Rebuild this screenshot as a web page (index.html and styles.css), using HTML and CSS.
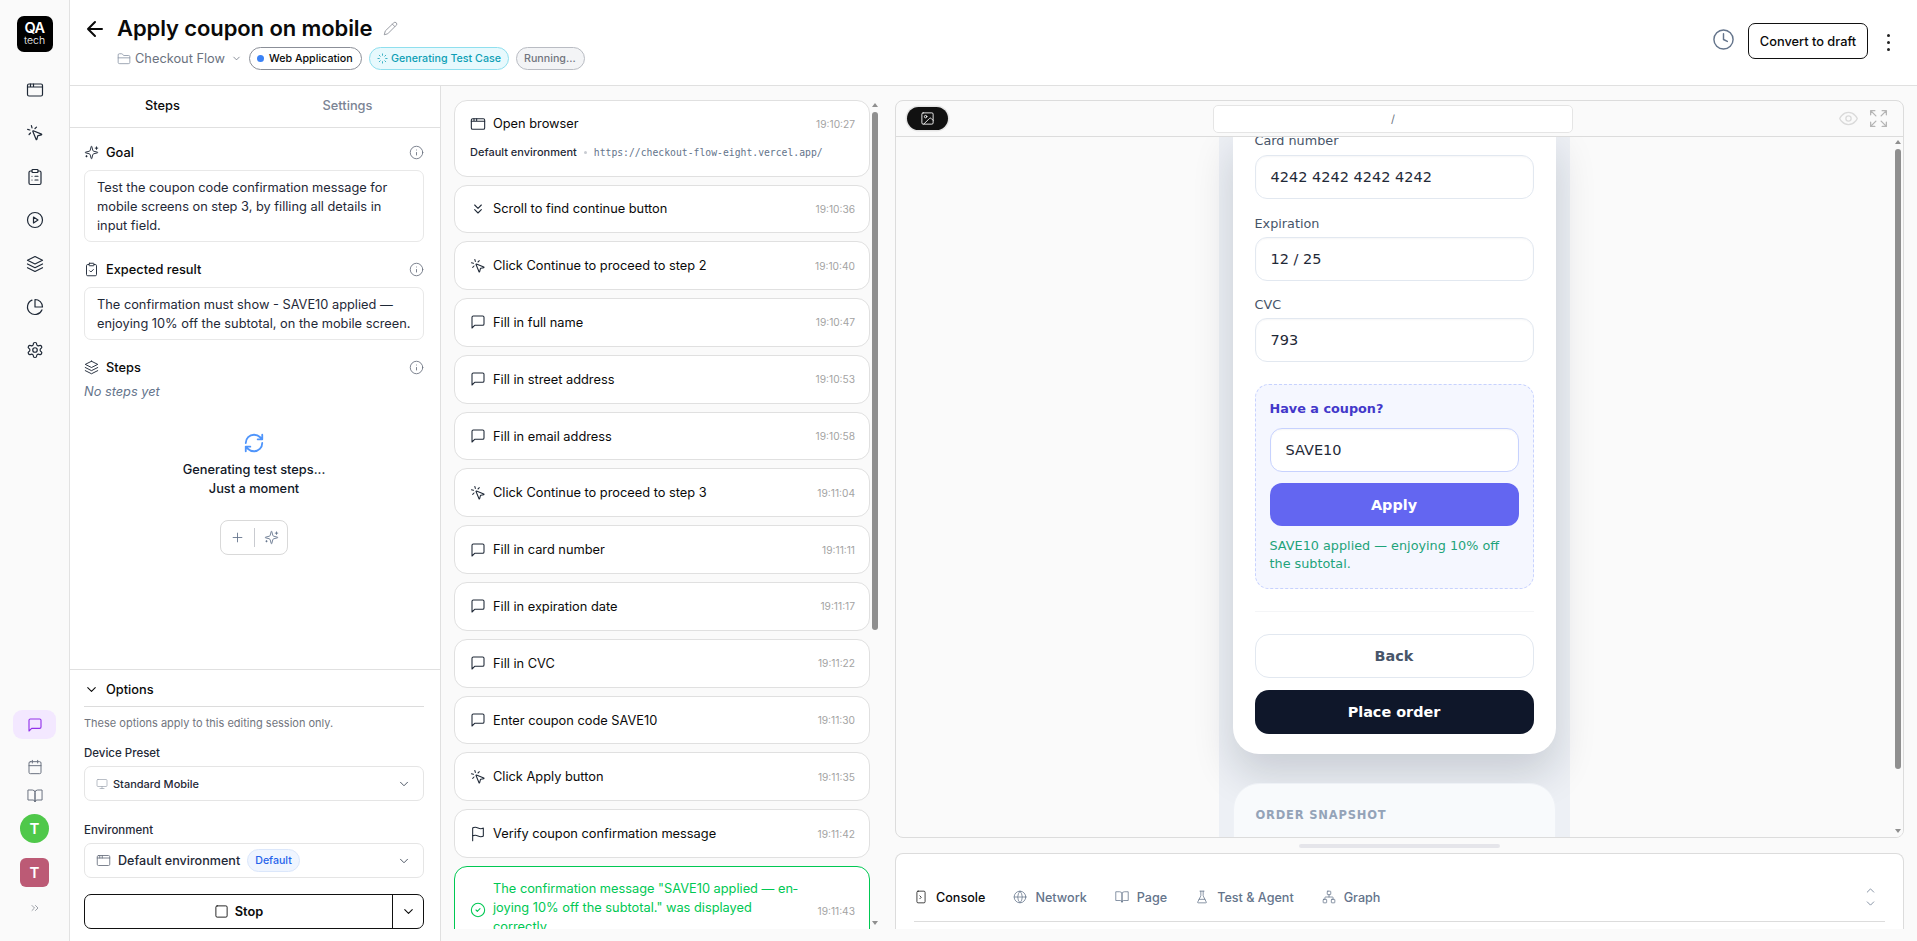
FILE: index.html
```html
<!DOCTYPE html>
<html>
<head>
    <title>Apply coupon on mobile</title>
    <link rel="stylesheet" href="styles.css">
</head>
<body>
    <svg class="sprite" xmlns="http://www.w3.org/2000/svg">
        <symbol id="i-window" viewBox="0 0 24 24"><rect x="2" y="4" width="20" height="16" rx="2"/><path d="M10 4v4M2 8h20M6 4v4"/></symbol>
        <symbol id="i-click" viewBox="0 0 24 24"><path d="M14 4.1 12 6M5.1 8l-2.9-.8M6 12l-1.9 2M7.2 2.2 8 5.1M9.037 9.69a.498.498 0 0 1 .653-.653l11 4.5a.5.5 0 0 1-.074.949l-4.349 1.041a1 1 0 0 0-.74.739l-1.04 4.35a.5.5 0 0 1-.95.074z"/></symbol>
        <symbol id="i-clipboard" viewBox="0 0 24 24"><rect x="8" y="2" width="8" height="4" rx="1"/><path d="M16 4h2a2 2 0 0 1 2 2v14a2 2 0 0 1-2 2H6a2 2 0 0 1-2-2V6a2 2 0 0 1 2-2h2M12 11h4M12 16h4M8 11h.01M8 16h.01"/></symbol>
        <symbol id="i-clipcheck" viewBox="0 0 24 24"><rect x="8" y="2" width="8" height="4" rx="1"/><path d="M16 4h2a2 2 0 0 1 2 2v14a2 2 0 0 1-2 2H6a2 2 0 0 1-2-2V6a2 2 0 0 1 2-2h2M9 14l2 2 4-4"/></symbol>
        <symbol id="i-play" viewBox="0 0 24 24"><circle cx="12" cy="12" r="10"/><path d="M10 8l6 4-6 4z"/></symbol>
        <symbol id="i-layers" viewBox="0 0 24 24"><path d="M12 2 2 7l10 5 10-5-10-5zM2 17l10 5 10-5M2 12l10 5 10-5"/></symbol>
        <symbol id="i-pie" viewBox="0 0 24 24"><path d="M21.21 15.89A10 10 0 1 1 8 2.83M22 12A10 10 0 0 0 12 2v10z"/></symbol>
        <symbol id="i-gear" viewBox="0 0 24 24"><path d="M12.22 2h-.44a2 2 0 0 0-2 2v.18a2 2 0 0 1-1 1.73l-.43.25a2 2 0 0 1-2 0l-.15-.08a2 2 0 0 0-2.73.73l-.22.38a2 2 0 0 0 .73 2.73l.15.1a2 2 0 0 1 1 1.72v.51a2 2 0 0 1-1 1.74l-.15.09a2 2 0 0 0-.73 2.73l.22.38a2 2 0 0 0 2.73.73l.15-.08a2 2 0 0 1 2 0l.43.25a2 2 0 0 1 1 1.73V20a2 2 0 0 0 2 2h.44a2 2 0 0 0 2-2v-.18a2 2 0 0 1 1-1.73l.43-.25a2 2 0 0 1 2 0l.15.08a2 2 0 0 0 2.73-.73l.22-.39a2 2 0 0 0-.73-2.73l-.15-.08a2 2 0 0 1-1-1.74v-.5a2 2 0 0 1 1-1.74l.15-.09a2 2 0 0 0 .73-2.73l-.22-.38a2 2 0 0 0-2.73-.73l-.15.08a2 2 0 0 1-2 0l-.43-.25a2 2 0 0 1-1-1.73V4a2 2 0 0 0-2-2z"/><circle cx="12" cy="12" r="3"/></symbol>
        <symbol id="i-msg" viewBox="0 0 24 24"><path d="M21 15a2 2 0 0 1-2 2H7l-4 4V5a2 2 0 0 1 2-2h14a2 2 0 0 1 2 2z"/></symbol>
        <symbol id="i-calendar" viewBox="0 0 24 24"><rect x="3" y="4" width="18" height="18" rx="2"/><path d="M16 2v4M8 2v4M3 10h18"/></symbol>
        <symbol id="i-book" viewBox="0 0 24 24"><path d="M2 3h6a4 4 0 0 1 4 4v14a3 3 0 0 0-3-3H2zM22 3h-6a4 4 0 0 0-4 4v14a3 3 0 0 1 3-3h7z"/></symbol>
        <symbol id="i-sparkles" viewBox="0 0 24 24"><path d="M9.937 15.5A2 2 0 0 0 8.5 14.063l-6.135-1.582a.5.5 0 0 1 0-.962L8.5 9.936A2 2 0 0 0 9.937 8.5l1.582-6.135a.5.5 0 0 1 .963 0L14.063 8.5A2 2 0 0 0 15.5 9.937l6.135 1.581a.5.5 0 0 1 0 .964L15.5 14.063a2 2 0 0 0-1.437 1.437l-1.582 6.135a.5.5 0 0 1-.963 0zM20 3v4M22 5h-4M4 17v2M5 18H3"/></symbol>
        <symbol id="i-info" viewBox="0 0 24 24"><circle cx="12" cy="12" r="10"/><path d="M12 16v-4M12 8h.01"/></symbol>
        <symbol id="i-refresh" viewBox="0 0 24 24"><path d="M3 12a9 9 0 0 1 9-9 9.75 9.75 0 0 1 6.74 2.74L21 8M21 3v5h-5M21 12a9 9 0 0 1-9 9 9.75 9.75 0 0 1-6.74-2.74L3 16M8 16H3v5"/></symbol>
        <symbol id="i-chevs" viewBox="0 0 24 24"><path d="M7 6l5 5 5-5M7 13l5 5 5-5"/></symbol>
        <symbol id="i-flag" viewBox="0 0 24 24"><path d="M4 15s1-1 4-1 5 2 8 2 4-1 4-1V3s-1 1-4 1-5-2-8-2-4 1-4 1zM4 22v-7"/></symbol>
        <symbol id="i-check" viewBox="0 0 24 24"><circle cx="12" cy="12" r="10"/><path d="M9 12l2 2 4-4"/></symbol>
        <symbol id="i-clock" viewBox="0 0 24 24"><circle cx="12" cy="12" r="10"/><path d="M12 6v6l4 2"/></symbol>
        <symbol id="i-folder" viewBox="0 0 24 24"><path d="M20 20a2 2 0 0 0 2-2V8a2 2 0 0 0-2-2h-7.9a2 2 0 0 1-1.69-.9L9.6 3.9A2 2 0 0 0 7.93 3H4a2 2 0 0 0-2 2v13a2 2 0 0 0 2 2ZM2 10h20"/></symbol>
        <symbol id="i-pencil" viewBox="0 0 24 24"><path d="M17 3a2.85 2.83 0 1 1 4 4L7.5 20.5 2 22l1.5-5.5ZM15 5l4 4"/></symbol>
        <symbol id="i-monitor" viewBox="0 0 24 24"><rect x="2" y="3" width="20" height="14" rx="2"/><path d="M8 21h8M12 17v4"/></symbol>
        <symbol id="i-square" viewBox="0 0 24 24"><rect x="3" y="3" width="18" height="18" rx="2"/></symbol>
        <symbol id="i-image" viewBox="0 0 24 24"><rect x="3" y="3" width="18" height="18" rx="2"/><circle cx="9" cy="9" r="2"/><path d="M21 15l-3.086-3.086a2 2 0 0 0-2.828 0L6 21"/></symbol>
        <symbol id="i-eye" viewBox="0 0 24 24"><path d="M2 12s3-7 10-7 10 7 10 7-3 7-10 7-10-7-10-7Z"/><circle cx="12" cy="12" r="3"/></symbol>
        <symbol id="i-expand" viewBox="0 0 24 24"><path d="M21 21l-6-6m6 6v-4.8m0 4.8h-4.8M3 16.2V21m0 0h4.8M3 21l6-6M21 7.8V3m0 0h-4.8M21 3l-6 6M3 7.8V3m0 0h4.8M3 3l6 6"/></symbol>
        <symbol id="i-term" viewBox="0 0 24 24"><rect x="5" y="2" width="14" height="20" rx="2"/><path d="M10 10l2.5 2.5L10 15"/></symbol>
        <symbol id="i-globe" viewBox="0 0 24 24"><circle cx="12" cy="12" r="10"/><path d="M12 2a14.5 14.5 0 0 0 0 20 14.5 14.5 0 0 0 0-20M2 12h20"/></symbol>
        <symbol id="i-flask" viewBox="0 0 24 24"><path d="M10 2v7.527a2 2 0 0 1-.211.896L4.72 20.55a1 1 0 0 0 .9 1.45h12.76a1 1 0 0 0 .9-1.45l-5.069-10.127A2 2 0 0 1 14 9.527V2M8.5 2h7M7 16h10"/></symbol>
        <symbol id="i-graph" viewBox="0 0 24 24"><rect x="16" y="16" width="6" height="6" rx="1"/><rect x="2" y="16" width="6" height="6" rx="1"/><rect x="9" y="2" width="6" height="6" rx="1"/><path d="M5 16v-3a1 1 0 0 1 1-1h12a1 1 0 0 1 1 1v3M12 12V8"/></symbol>
        <symbol id="i-down" viewBox="0 0 24 24"><path d="M6 9l6 6 6-6"/></symbol>
        <symbol id="i-up" viewBox="0 0 24 24"><path d="M18 15l-6-6-6 6"/></symbol>
        <symbol id="i-right2" viewBox="0 0 24 24"><path d="M6 17l5-5-5-5M13 17l5-5-5-5"/></symbol>
        <symbol id="i-back" viewBox="0 0 24 24"><path d="M12 19l-7-7 7-7M19 12H5"/></symbol>
        <symbol id="i-plus" viewBox="0 0 24 24"><path d="M5 12h14M12 5v14"/></symbol>
        <symbol id="i-loader" viewBox="0 0 24 24"><path d="M12 2v3M12 19v3M4.9 4.9 7 7M17 17l2.1 2.1M2 12h3M19 12h3M4.9 19.1 7 17M17 7l2.1-2.1"/></symbol>
    </svg>

    <div class="app">
        <aside class="sidebar">
            <div class="logo"><span class="logo-qa">QA</span><span class="logo-tech">tech</span></div>
            <nav class="side-nav">
                <svg class="ic side-ic"><use href="#i-window"/></svg>
                <svg class="ic side-ic"><use href="#i-click"/></svg>
                <svg class="ic side-ic"><use href="#i-clipboard"/></svg>
                <svg class="ic side-ic"><use href="#i-play"/></svg>
                <svg class="ic side-ic"><use href="#i-layers"/></svg>
                <svg class="ic side-ic"><use href="#i-pie"/></svg>
                <svg class="ic side-ic"><use href="#i-gear"/></svg>
            </nav>
            <div class="side-bottom">
                <div class="chat-btn"><svg class="ic chat-ic"><use href="#i-msg"/></svg></div>
                <svg class="ic side-small cal"><use href="#i-calendar"/></svg>
                <svg class="ic side-small book"><use href="#i-book"/></svg>
                <div class="avatar round">T</div>
                <div class="avatar squared">T</div>
                <svg class="ic side-more"><use href="#i-right2"/></svg>
            </div>
        </aside>

        <div class="main">
            <header class="topbar">
                <svg class="ic back-ic"><use href="#i-back"/></svg>
                <div class="title-block">
                    <div class="title-row">
                        <h1>Apply coupon on mobile</h1>
                        <svg class="ic pencil"><use href="#i-pencil"/></svg>
                    </div>
                    <div class="meta-row">
                        <svg class="ic folder"><use href="#i-folder"/></svg>
                        <span class="crumb">Checkout Flow</span>
                        <svg class="ic crumb-chev"><use href="#i-down"/></svg>
                        <span class="pill pill-app"><i class="dot"></i>Web Application</span>
                        <span class="pill pill-gen"><svg class="ic gen-ic"><use href="#i-loader"/></svg>Generating Test Case</span>
                        <span class="pill pill-run">Running...</span>
                    </div>
                </div>
                <div class="top-actions">
                    <svg class="ic clock"><use href="#i-clock"/></svg>
                    <button class="btn-outline">Convert to draft</button>
                    <div class="kebab"><i></i><i></i><i></i></div>
                </div>
            </header>

            <div class="workspace">
                <section class="left-panel">
                    <div class="tabs">
                        <div class="tab active">Steps</div>
                        <div class="tab">Settings</div>
                    </div>
                    <div class="left-body">
                        <div class="field-head first">
                            <svg class="ic head-ic"><use href="#i-sparkles"/></svg>
                            <span>Goal</span>
                            <svg class="ic info"><use href="#i-info"/></svg>
                        </div>
                        <div class="text-box">Test the coupon code confirmation message for mobile screens on step 3, by filling all details in input field.</div>
                        <div class="field-head">
                            <svg class="ic head-ic"><use href="#i-clipcheck"/></svg>
                            <span>Expected result</span>
                            <svg class="ic info"><use href="#i-info"/></svg>
                        </div>
                        <div class="text-box">The confirmation must show - SAVE10 applied — enjoying 10% off the subtotal, on the mobile screen.</div>
                        <div class="field-head">
                            <svg class="ic head-ic"><use href="#i-layers"/></svg>
                            <span>Steps</span>
                            <svg class="ic info"><use href="#i-info"/></svg>
                        </div>
                        <div class="no-steps">No steps yet</div>
                        <div class="generating">
                            <svg class="ic spin"><use href="#i-refresh"/></svg>
                            <p>Generating test steps...<br>Just a moment</p>
                            <div class="add-group">
                                <svg class="ic add-ic"><use href="#i-plus"/></svg>
                                <i class="add-sep"></i>
                                <svg class="ic add-ic"><use href="#i-sparkles"/></svg>
                            </div>
                        </div>
                    </div>
                    <div class="options">
                        <div class="options-head">
                            <svg class="ic opt-chev"><use href="#i-down"/></svg>
                            <span>Options</span>
                        </div>
                        <p class="hint">These options apply to this editing session only.</p>
                        <label class="opt-label">Device Preset</label>
                        <div class="select">
                            <svg class="ic sel-ic small"><use href="#i-monitor"/></svg>
                            <span class="sel-small">Standard Mobile</span>
                            <svg class="ic sel-chev"><use href="#i-down"/></svg>
                        </div>
                        <label class="opt-label env">Environment</label>
                        <div class="select">
                            <svg class="ic sel-ic"><use href="#i-window"/></svg>
                            <span class="sel-text">Default environment</span>
                            <span class="badge">Default</span>
                            <svg class="ic sel-chev"><use href="#i-down"/></svg>
                        </div>
                        <div class="stop-btn">
                            <div class="stop-main"><svg class="ic stop-ic"><use href="#i-square"/></svg>Stop</div>
                            <div class="stop-more"><svg class="ic stop-chev"><use href="#i-down"/></svg></div>
                        </div>
                    </div>
                </section>

                <section class="steps-col">
                    <div class="step-list">
                        <div class="step step-first">
                            <div class="step-row">
                                <svg class="ic step-ic"><use href="#i-window"/></svg>
                                <span class="step-name">Open browser</span>
                                <span class="step-time">19:10:27</span>
                            </div>
                            <div class="step-env">
                                <span>Default environment</span><i class="env-dot"></i><code>https://checkout-flow-eight.vercel.app/</code>
                            </div>
                        </div>
                        <div class="step"><svg class="ic step-ic"><use href="#i-chevs"/></svg><span class="step-name">Scroll to find continue button</span><span class="step-time">19:10:36</span></div>
                        <div class="step"><svg class="ic step-ic"><use href="#i-click"/></svg><span class="step-name">Click Continue to proceed to step 2</span><span class="step-time">19:10:40</span></div>
                        <div class="step"><svg class="ic step-ic"><use href="#i-msg"/></svg><span class="step-name">Fill in full name</span><span class="step-time">19:10:47</span></div>
                        <div class="step"><svg class="ic step-ic"><use href="#i-msg"/></svg><span class="step-name">Fill in street address</span><span class="step-time">19:10:53</span></div>
                        <div class="step"><svg class="ic step-ic"><use href="#i-msg"/></svg><span class="step-name">Fill in email address</span><span class="step-time">19:10:58</span></div>
                        <div class="step"><svg class="ic step-ic"><use href="#i-click"/></svg><span class="step-name">Click Continue to proceed to step 3</span><span class="step-time">19:11:04</span></div>
                        <div class="step"><svg class="ic step-ic"><use href="#i-msg"/></svg><span class="step-name">Fill in card number</span><span class="step-time">19:11:11</span></div>
                        <div class="step"><svg class="ic step-ic"><use href="#i-msg"/></svg><span class="step-name">Fill in expiration date</span><span class="step-time">19:11:17</span></div>
                        <div class="step"><svg class="ic step-ic"><use href="#i-msg"/></svg><span class="step-name">Fill in CVC</span><span class="step-time">19:11:22</span></div>
                        <div class="step"><svg class="ic step-ic"><use href="#i-msg"/></svg><span class="step-name">Enter coupon code SAVE10</span><span class="step-time">19:11:30</span></div>
                        <div class="step"><svg class="ic step-ic"><use href="#i-click"/></svg><span class="step-name">Click Apply button</span><span class="step-time">19:11:35</span></div>
                        <div class="step"><svg class="ic step-ic"><use href="#i-flag"/></svg><span class="step-name">Verify coupon confirmation message</span><span class="step-time">19:11:42</span></div>
                        <div class="step step-ok">
                            <svg class="ic step-ic"><use href="#i-check"/></svg>
                            <span class="step-name">The confirmation message "SAVE10 applied — en&shy;joying 10% off the subtotal." was displayed correctly</span>
                            <span class="step-time">19:11:43</span>
                        </div>
                    </div>
                    <div class="scrollbar">
                        <i class="arrow-up"></i>
                        <div class="track"><div class="thumb steps-thumb"></div></div>
                        <i class="arrow-down"></i>
                    </div>
                </section>

                <section class="right-col">
                    <div class="preview">
                        <div class="preview-bar">
                            <div class="shot-btn"><svg class="ic shot-ic"><use href="#i-image"/></svg></div>
                            <div class="url-box">/</div>
                            <div class="preview-tools">
                                <svg class="ic eye"><use href="#i-eye"/></svg>
                                <svg class="ic expand"><use href="#i-expand"/></svg>
                            </div>
                        </div>
                        <div class="preview-body">
                            <div class="viewport">
                                <div class="device">
                                    <div class="phone">
                                        <label class="f-label">Card number</label>
                                        <div class="f-input">4242 4242 4242 4242</div>
                                        <label class="f-label">Expiration</label>
                                        <div class="f-input">12 / 25</div>
                                        <label class="f-label">CVC</label>
                                        <div class="f-input">793</div>
                                        <div class="coupon">
                                            <div class="coupon-title">Have a coupon?</div>
                                            <div class="f-input coupon-input">SAVE10</div>
                                            <button class="apply">Apply</button>
                                            <p class="coupon-msg">SAVE10 applied — enjoying 10% off the subtotal.</p>
                                        </div>
                                        <div class="phone-line"></div>
                                        <button class="p-back">Back</button>
                                        <button class="p-place">Place order</button>
                                    </div>
                                    <div class="snapshot">ORDER SNAPSHOT</div>
                                </div>
                            </div>
                            <div class="scrollbar pv-scroll">
                                <i class="arrow-up"></i>
                                <div class="track"><div class="thumb pv-thumb"></div></div>
                                <i class="arrow-down"></i>
                            </div>
                        </div>
                    </div>
                    <div class="resizer"><i></i></div>
                    <div class="console">
                        <div class="console-tabs">
                            <div class="c-tab active"><svg class="ic c-ic"><use href="#i-term"/></svg>Console</div>
                            <div class="c-tab"><svg class="ic c-ic"><use href="#i-globe"/></svg>Network</div>
                            <div class="c-tab"><svg class="ic c-ic"><use href="#i-book"/></svg>Page</div>
                            <div class="c-tab"><svg class="ic c-ic"><use href="#i-flask"/></svg>Test &amp; Agent</div>
                            <div class="c-tab"><svg class="ic c-ic"><use href="#i-graph"/></svg>Graph</div>
                            <div class="c-toggle">
                                <svg class="ic"><use href="#i-up"/></svg>
                                <svg class="ic"><use href="#i-down"/></svg>
                            </div>
                        </div>
                    </div>
                </section>
            </div>
        </div>
    </div>
</body>
</html>
```

FILE: styles.css
```css
* {
    box-sizing: border-box;
}
html, body {
    margin: 0;
    height: 100%;
    overflow: hidden;
}
body {
    font-family: 'Inter', 'Liberation Sans', sans-serif;
    color: #0a0a0a;
    background-color: #fafafa;
    font-size: 12.8px;
}
.sprite {
    display: none;
}
.ic {
    display: block;
    width: 16px;
    height: 16px;
    fill: none;
    stroke: currentColor;
    stroke-width: 1.7;
    stroke-linecap: round;
    stroke-linejoin: round;
    flex: none;
}
.app {
    display: flex;
    height: 941px;
}

/* sidebar */
.sidebar {
    width: 70px;
    flex: none;
    display: flex;
    flex-direction: column;
    align-items: center;
    background-color: #fafafa;
    border-right: 1px solid #e2e2e2;
    padding-top: 16px;
}
.logo {
    width: 36px;
    height: 36px;
    background-color: #000;
    color: #fff;
    border-radius: 7px;
    display: flex;
    flex-direction: column;
    align-items: center;
    justify-content: center;
}
.logo-qa {
    font-size: 14.5px;
    font-weight: 600;
    letter-spacing: -0.6px;
    line-height: 14px;
}
.logo-tech {
    font-size: 10.5px;
    font-weight: 300;
    line-height: 12px;
}
.side-nav {
    display: flex;
    flex-direction: column;
    align-items: center;
    gap: 25.4px;
    margin-top: 29px;
}
.side-ic {
    width: 18px;
    height: 18px;
    color: #1f2937;
    stroke-width: 1.6;
}
.side-bottom {
    margin-top: auto;
    display: flex;
    flex-direction: column;
    align-items: center;
    padding-bottom: 27px;
}
.chat-btn {
    width: 43px;
    height: 29px;
    border-radius: 9px;
    background-color: #f3e8ff;
    color: #9333ea;
    display: flex;
    align-items: center;
    justify-content: center;
}
.side-small {
    color: #6b7280;
    width: 16px;
    height: 16px;
    stroke-width: 1.5;
}
.cal {
    margin-top: 20px;
}
.book {
    margin-top: 13px;
}
.avatar {
    width: 29px;
    height: 29px;
    color: #fff;
    font-weight: 600;
    font-size: 15px;
    display: flex;
    align-items: center;
    justify-content: center;
}
.avatar.round {
    margin-top: 10px;
    border-radius: 50%;
    background-color: #4fc84a;
}
.avatar.squared {
    margin-top: 15px;
    border-radius: 6px;
    background-color: #bc5a75;
}
.side-more {
    margin-top: 15px;
    width: 12px;
    height: 12px;
    color: #8a8f98;
}

/* top bar */
.main {
    flex: 1;
    min-width: 0;
    display: flex;
    flex-direction: column;
}
.topbar {
    height: 86px;
    flex: none;
    background-color: #fff;
    border-bottom: 1px solid #e0e0e0;
    display: flex;
    padding: 13px 0 0 13px;
}
.back-ic {
    width: 24px;
    height: 24px;
    stroke-width: 2;
    margin-top: 4px;
}
.title-block {
    margin-left: 10px;
}
.title-row {
    display: flex;
    align-items: center;
    height: 30px;
}
h1 {
    margin: 0;
    font-size: 22px;
    font-weight: 600;
    letter-spacing: -0.1px;
}
.pencil {
    width: 15px;
    height: 15px;
    color: #8b8f98;
    margin-left: 11px;
    stroke-width: 1.4;
}
.meta-row {
    display: flex;
    align-items: center;
    margin-top: 4px;
    height: 23px;
}
.folder {
    width: 14px;
    height: 14px;
    color: #8b95a5;
    stroke-width: 1.4;
}
.crumb {
    margin-left: 4px;
    color: #6b7280;
    font-size: 12.8px;
}
.crumb-chev {
    width: 11px;
    height: 11px;
    color: #6b7280;
    margin: 0 7px 0 6px;
}
.pill {
    height: 23px;
    border-radius: 12px;
    font-size: 10.7px;
    font-weight: 500;
    white-space: nowrap;
    display: flex;
    align-items: center;
    padding: 0 7px;
    margin-right: 7px;
    border: 1px solid #9ca3af;
}
.pill-app {
    width: 113px;
    border-color: #8b8f98;
}
.dot {
    width: 7px;
    height: 7px;
    border-radius: 50%;
    background-color: #3b82f6;
    margin-right: 5px;
    margin-left: 0;
}
.pill-gen {
    width: 140px;
    color: #0e9fb5;
    background-color: #e7f9fd;
    border-color: #8fdfee;
}
.gen-ic {
    width: 11px;
    height: 11px;
    margin-right: 3px;
}
.pill-run {
    width: 69px;
    color: #71757e;
    background-color: #f3f4f6;
    border-color: #b9bcc3;
}
.top-actions {
    margin-left: auto;
    display: flex;
    align-items: flex-start;
    padding: 10px 27px 0 0;
}
.clock {
    width: 23px;
    height: 23px;
    color: #64748b;
    margin: 5px 13px 0 0;
    stroke-width: 1.5;
}
.btn-outline {
    width: 120px;
    height: 36px;
    background-color: #fff;
    border: 1px solid #111;
    border-radius: 7px;
    font-family: inherit;
    font-size: 12.8px;
    font-weight: 500;
    color: #0a0a0a;
}
.kebab {
    display: flex;
    flex-direction: column;
    gap: 4px;
    margin: 11px 0 0 19px;
}
.kebab i {
    width: 3px;
    height: 3px;
    border-radius: 50%;
    background-color: #222;
}

/* left panel */
.workspace {
    flex: 1;
    min-height: 0;
    display: flex;
}
.left-panel {
    width: 371px;
    flex: none;
    background-color: #fff;
    border-right: 1px solid #e0e0e0;
    display: flex;
    flex-direction: column;
}
.tabs {
    display: flex;
    height: 42px;
    flex: none;
    padding-bottom: 2px;
    border-bottom: 1px solid #e0e0e0;
}
.tab {
    flex: 1;
    display: flex;
    align-items: center;
    justify-content: center;
    font-weight: 500;
    color: #7b8494;
}
.tab.active {
    color: #0a0a0a;
}
.left-body {
    flex: 1;
    min-height: 0;
    padding: 0 16px 0 14px;
}
.field-head {
    display: flex;
    align-items: center;
    height: 20px;
    margin: 17px 0 8px;
    font-weight: 500;
}
.field-head.first {
    margin: 14px 0 8px;
}
.head-ic {
    width: 15px;
    height: 15px;
    margin-right: 7px;
    color: #1f2937;
    stroke-width: 1.5;
}
.info {
    margin-left: auto;
    width: 15px;
    height: 15px;
    color: #6b7280;
    stroke-width: 1.4;
}
.text-box {
    border: 1px solid #e8e8e8;
    border-radius: 7px;
    padding: 6.5px 12px;
    line-height: 19px;
    color: #1f2937;
}
.no-steps {
    margin-top: -2px;
    font-size: 12.8px;
    line-height: 18px;
    font-style: italic;
    color: #64748b;
}
.generating {
    display: flex;
    flex-direction: column;
    align-items: center;
    margin-top: 31px;
}
.spin {
    width: 22px;
    height: 22px;
    color: #4f95fb;
    stroke-width: 2;
}
.generating p {
    margin: 7px 0 0;
    text-align: center;
    line-height: 18.5px;
    font-weight: 500;
    color: #111827;
}
.add-group {
    margin-top: 22px;
    width: 68px;
    height: 35px;
    border: 1px solid #d9d9d9;
    border-radius: 8px;
    display: flex;
    align-items: center;
    justify-content: center;
    color: #64748b;
}
.add-ic {
    width: 15px;
    height: 15px;
    stroke-width: 1.4;
}
.add-sep {
    width: 1px;
    height: 19px;
    background-color: #c9cbd0;
    margin: 0 9px;
}
.options {
    flex: none;
    height: 272px;
    border-top: 1px solid #e0e0e0;
    padding: 10px 16px 0 14px;
}
.options-head {
    display: flex;
    align-items: center;
    height: 27px;
    padding-bottom: 7px;
    border-bottom: 1px solid #dcdcdc;
    font-weight: 500;
}
.opt-chev {
    width: 15px;
    height: 15px;
    margin: 0 7px 0 0;
}
.hint {
    margin: 8px 0 0;
    font-size: 11px;
    line-height: 16px;
    color: #71757e;
}
.opt-label {
    display: block;
    margin-top: 14px;
    font-size: 11.5px;
    line-height: 16px;
    font-weight: 500;
    color: #1f2937;
}
.opt-label.env {
    margin-top: 21px;
}
.select {
    margin-top: 5px;
    height: 35px;
    border: 1px solid #e5e5e5;
    border-radius: 7px;
    display: flex;
    align-items: center;
    padding: 0 12px 0 11px;
}
.sel-ic {
    color: #6b7280;
    width: 15px;
    height: 15px;
    stroke-width: 1.4;
    margin-right: 7px;
}
.sel-ic.small {
    width: 12px;
    height: 12px;
    margin-right: 5px;
    color: #9ca3af;
}
.sel-small {
    font-size: 11px;
    font-weight: 500;
    color: #1f2937;
}
.sel-text {
    font-size: 12.6px;
    font-weight: 500;
    color: #1f2937;
}
.badge {
    margin-left: 7px;
    height: 23px;
    padding: 0 7px;
    display: flex;
    align-items: center;
    border: 1px solid #dbe7fb;
    border-radius: 12px;
    background-color: #eff5ff;
    color: #2563eb;
    font-size: 10.6px;
    font-weight: 500;
}
.sel-chev {
    margin-left: auto;
    width: 14px;
    height: 14px;
    color: #374151;
    stroke-width: 1.5;
}
.stop-btn {
    margin-top: 16px;
    height: 35px;
    border: 1px solid #111;
    border-radius: 7px;
    display: flex;
}
.stop-main {
    flex: 1;
    display: flex;
    align-items: center;
    justify-content: center;
    font-weight: 600;
    border-right: 1px solid #111;
}
.stop-ic {
    width: 15px;
    height: 15px;
    margin-right: 6px;
    stroke-width: 1.4;
}
.stop-more {
    width: 30px;
    display: flex;
    align-items: center;
    justify-content: center;
}
.stop-chev {
    width: 15px;
    height: 15px;
}

/* step list */
.steps-col {
    width: 454px;
    flex: none;
    height: 843px;
    display: flex;
    padding: 14px 0 0 13px;
}
.step-list {
    width: 416px;
    flex: none;
    display: flex;
    flex-direction: column;
    gap: 8px;
    overflow: hidden;
}
.step {
    flex: none;
    height: 48.8px;
    background-color: #fff;
    border: 1.5px solid #e0e0e0;
    border-radius: 13px;
    display: flex;
    align-items: center;
    padding: 0 14px 0 15px;
}
.step-first {
    height: 76.5px;
    display: block;
    padding-top: 13px;
}
.step-row {
    display: flex;
    align-items: center;
    height: 19px;
}
.step-ic {
    width: 16px;
    height: 16px;
    margin-right: 7px;
    color: #1f2937;
    stroke-width: 1.6;
}
.step-name {
    font-weight: 400;
    line-height: 19px;
    color: #0a0a0a;
}
.step-time {
    margin-left: auto;
    font-size: 10.2px;
    color: #a3a3a3;
    flex: none;
}
.step-env {
    display: flex;
    align-items: center;
    margin-top: 12px;
    font-size: 11px;
    font-weight: 500;
    color: #1f2937;
}
.env-dot {
    width: 3px;
    height: 3px;
    border-radius: 50%;
    background-color: #c8ccd2;
    margin: 0 7px 0 7px;
}
.step-env code {
    font-family: 'DejaVu Sans Mono', 'Liberation Mono', monospace;
    font-size: 9.75px;
    font-weight: 400;
    color: #64748b;
}
.step-ok {
    height: 100px;
    flex: none;
    border-color: #00c853;
    align-items: flex-start;
    padding-top: 12px;
}
.step-ok .step-ic {
    color: #00c853;
    margin-top: 23px;
}
.step-ok .step-name {
    color: #00c853;
    width: 310px;
}
.step-ok .step-time {
    margin-top: 26px;
}
.scrollbar {
    width: 8px;
    margin-left: 1px;
    display: flex;
    flex-direction: column;
    align-items: center;
}
.arrow-up,
.arrow-down {
    width: 0;
    height: 0;
    flex: none;
    border-left: 3.5px solid transparent;
    border-right: 3.5px solid transparent;
}
.arrow-up {
    margin-top: 3px;
    border-bottom: 4px solid #8f8f8f;
}
.arrow-down {
    margin-bottom: 4px;
    border-top: 4px solid #8f8f8f;
}
.track {
    flex: 1;
    width: 100%;
    padding-top: 5px;
}
.thumb {
    width: 6px;
    margin: 0 auto;
    background-color: #8f8f8f;
    border-radius: 3px;
}
.steps-thumb {
    height: 518px;
}

/* preview */
.right-col {
    flex: 1;
    min-width: 0;
    height: 843px;
    padding: 14px 13px 0 0;
    display: flex;
    flex-direction: column;
}
.preview {
    height: 738px;
    flex: none;
    border: 1px solid #dcdcdc;
    border-radius: 8px;
    overflow: hidden;
    display: flex;
    flex-direction: column;
}
.preview-bar {
    height: 36px;
    flex: none;
    border-bottom: 1px solid #dcdcdc;
    display: flex;
    align-items: center;
    padding: 0 14px 0 11px;
}
.shot-btn {
    width: 41px;
    height: 23px;
    background-color: #111;
    border-radius: 12px;
    box-shadow: 0 0 0 1.5px #e5e5e5;
    color: #fff;
    display: flex;
    align-items: center;
    justify-content: center;
}
.shot-ic {
    width: 15px;
    height: 15px;
    stroke-width: 1.4;
}
.url-box {
    width: 360px;
    height: 28px;
    margin-left: 265px;
    background-color: #fff;
    border: 1px solid #e5e5e5;
    border-radius: 5px;
    display: flex;
    align-items: center;
    justify-content: center;
    font-size: 11px;
    color: #6b7280;
}
.preview-tools {
    margin-left: auto;
    display: flex;
    align-items: center;
    gap: 9px;
}
.eye {
    width: 21px;
    height: 21px;
    color: #dadada;
    stroke-width: 1.5;
}
.expand {
    width: 21px;
    height: 21px;
    color: #b5b5b5;
    stroke-width: 1.5;
}
.preview-body {
    flex: 1;
    min-height: 0;
    display: flex;
}
.viewport {
    flex: 1;
    min-width: 0;
    overflow: hidden;
    display: flex;
    justify-content: center;
}
.device {
    width: 351px;
    flex: none;
    padding: 0 14px;
    background-color: #edf0f5;
    height: 720px;
}
.phone {
    margin-top: -5px;
    height: 622px;
    background-color: #fff;
    border-radius: 0 0 26px 26px;
    padding: 0 22px;
    box-shadow: 0 20px 40px rgba(15, 23, 42, 0.16);
    font-family: 'DejaVu Sans', sans-serif;
}
.f-label {
    display: block;
    font-size: 12.8px;
    line-height: 18px;
    color: #475569;
    margin-bottom: 4px;
    padding-top: 1px;
}
.f-label:first-child {
    padding-top: 0;
    margin-bottom: 5px;
}
.f-input {
    height: 44px;
    border: 1px solid #e2e8f0;
    border-radius: 12px;
    background-color: #fff;
    padding: 0 15px;
    display: flex;
    align-items: center;
    font-size: 14.5px;
    color: #1f2937;
    margin-bottom: 14.5px;
    box-shadow: inset 0 1px 2px rgba(15, 23, 42, 0.04);
}
.coupon {
    margin-top: 22px;
    height: 205px;
    border: 1px dashed #c7d2fe;
    border-radius: 14px;
    background-color: #f5f7ff;
    padding: 15px 14px 0;
}
.coupon-title {
    font-size: 12.8px;
    line-height: 18px;
    font-weight: 700;
    color: #4338ca;
    margin-bottom: 10px;
}
.coupon-input {
    border-color: #c7d2fe;
    margin-bottom: 11px;
}
.apply {
    width: 100%;
    height: 43px;
    background-color: #6366f1;
    color: #fff;
    border: 0;
    border-radius: 12px;
    font-family: inherit;
    font-size: 14.4px;
    font-weight: 700;
}
.coupon-msg {
    margin: 11px 0 0;
    font-size: 12.8px;
    line-height: 18px;
    color: #1ea37a;
}
.phone-line {
    height: 1px;
    background-color: #f4f5f7;
    margin: 22px 0;
}
.p-back,
.p-place {
    display: block;
    width: 100%;
    height: 44px;
    border-radius: 14px;
    font-family: inherit;
    font-size: 14.4px;
    font-weight: 700;
}
.p-back {
    background-color: #fff;
    border: 1px solid #e2e8f0;
    color: #475569;
}
.p-place {
    margin-top: 12px;
    background-color: #0f172a;
    border: 0;
    color: #fff;
}
.snapshot {
    margin-top: 29px;
    height: 200px;
    background-color: #f8fafc;
    border: 1px solid #eef1f6;
    border-radius: 26px;
    padding: 22px 22px 0;
    font-family: 'DejaVu Sans', sans-serif;
    font-size: 11.5px;
    line-height: 18px;
    font-weight: 700;
    letter-spacing: 0.8px;
    color: #94a3b8;
}
.pv-scroll {
    width: 11px;
    margin: 0;
    background-color: #fafafa;
}
.pv-thumb {
    height: 620px;
}
.resizer {
    height: 15px;
    flex: none;
    display: flex;
    justify-content: center;
    align-items: center;
}
.resizer i {
    width: 201px;
    height: 4px;
    background-color: #e5e5ea;
    border-radius: 2px;
}
.console {
    flex: 1;
    min-height: 0;
    background-color: #fff;
    border: 1px solid #dcdcdc;
    border-bottom: 0;
    border-radius: 8px 8px 0 0;
    padding: 0 18px;
}
.console-tabs {
    height: 68px;
    border-bottom: 1px solid #dcdcdc;
    display: flex;
    align-items: center;
    padding-top: 19px;
    gap: 28px;
}
.c-tab {
    display: flex;
    align-items: center;
    font-size: 12.6px;
    font-weight: 500;
    color: #64748b;
}
.c-tab.active {
    color: #0a0a0a;
}
.c-ic {
    width: 14px;
    height: 14px;
    margin-right: 8px;
    stroke-width: 1.3;
}
.c-toggle {
    margin-left: auto;
    margin-right: 8px;
    color: #64748b;
}
.c-toggle .ic {
    width: 13px;
    height: 13px;
    stroke-width: 1.4;
}
```
